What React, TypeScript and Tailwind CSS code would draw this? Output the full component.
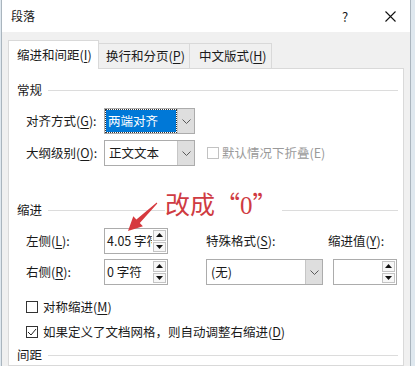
import React from 'react';

function Acc({ label, k, colon = false }: { label: string; k: string; colon?: boolean }) {
  return (
    <>
      {label}(<span className="underline underline-offset-2">{k}</span>){colon ? ':' : ''}
    </>
  );
}

function Chevron() {
  return (
    <svg width="9" height="5" viewBox="0 0 9 5">
      <path d="M0.5 0.5 L4.5 4.5 L8.5 0.5" stroke="#5a5a5a" fill="none" strokeWidth="1" />
    </svg>
  );
}

function Select({ w, value, focused = false }: { w: string; value: string; focused?: boolean }) {
  return (
    <div className={`flex h-full border border-[#acacac] bg-white ${w}`}>
      <div className="flex-1 flex items-center px-[1px]">
        {focused ? (
          <span className="flex items-center h-[22px] w-full bg-[#0078d7] text-white pl-[2px] outline outline-dotted outline-[#333]">{value}</span>
        ) : (
          <span className="pl-[3px]">{value}</span>
        )}
      </div>
      <div className="w-[17px] bg-[#dedede] border-l border-[#c6c6c6] flex items-center justify-center">
        <Chevron />
      </div>
    </div>
  );
}

function Spin({ value }: { value: string }) {
  return (
    <div className="flex w-[64px] h-full border border-[#acacac] bg-white">
      <div className="flex-1 overflow-hidden whitespace-nowrap flex items-center pl-[2px]">{value}</div>
      <div className="w-[15px] flex flex-col gap-[1px] p-[1px]">
        <div className="flex-1 flex items-center justify-center border border-[#c4c4c4] bg-[#f7f7f7]">
          <svg width="7" height="4" viewBox="0 0 7 4"><path d="M0 4 L3.5 0 L7 4 Z" fill="#111" /></svg>
        </div>
        <div className="flex-1 flex items-center justify-center border border-[#c4c4c4] bg-[#f7f7f7]">
          <svg width="7" height="4" viewBox="0 0 7 4"><path d="M0 0 L3.5 4 L7 0 Z" fill="#111" /></svg>
        </div>
      </div>
    </div>
  );
}

function Section({ title, className = '' }: { title: string; className?: string }) {
  return (
    <div className={`flex items-center h-[16px] ${className}`}>
      <span>{title}</span>
      <div className="flex-1 h-px bg-[#dcdcdc] ml-[6px] mr-[5px]" />
    </div>
  );
}

function Check({ checked = false, disabled = false }: { checked?: boolean; disabled?: boolean }) {
  return (
    <span className={`w-[12px] h-[12px] border bg-white flex items-center justify-center ${disabled ? 'border-[#c2c2c2]' : 'border-[#333]'}`}>
      {checked && (
        <svg width="10" height="10" viewBox="0 0 10 10">
          <path d="M1 5 L4 8 L9 2" stroke="#222" fill="none" strokeWidth="1" />
        </svg>
      )}
    </span>
  );
}

export default function App() {
  return (
    <div className="relative w-[415px] h-[366px] overflow-hidden bg-[#dfe8ef] text-[12.5px] leading-none text-[#1a1a1a] font-['Noto_Sans_CJK_SC','Noto_Sans',sans-serif]">
      <div className="ml-[1px] w-[410px] h-full flex flex-col bg-[#f0f0f0] border-x border-[#aab5be]">
        {/* Title bar */}
        <div className="h-[32px] bg-white flex items-center pl-[9px]">
          <span className="text-[12px]">段落</span>
          <div className="flex-1" />
          <span className="w-[20px] text-center text-[13px]">?</span>
          <span className="ml-[25px] w-[20px] flex justify-center">
            <svg width="11" height="11" viewBox="0 0 11 11">
              <path d="M0.5 0.5 L10.5 10.5 M10.5 0.5 L0.5 10.5" stroke="#111" strokeWidth="1.1" />
            </svg>
          </span>
          <span className="w-[10px]" />
        </div>

        {/* Tabs */}
        <div className="mt-[8px] ml-[6px] h-[28px] flex items-end">
          <div className="relative z-10 -mb-px h-[29px] w-[91px] bg-white border border-b-0 border-[#d9d9d9] flex items-center pl-[8px]">
            <Acc label="缩进和间距" k="I" />
          </div>
          <div className="h-[25px] w-[91px] border border-b-0 border-l-0 border-[#d9d9d9] bg-[#f0f0f0] flex items-center pl-[7px]">
            <Acc label="换行和分页" k="P" />
          </div>
          <div className="h-[25px] w-[82px] border border-b-0 border-l-0 border-[#d9d9d9] bg-[#f0f0f0] flex items-center pl-[9px]">
            <Acc label="中文版式" k="H" />
          </div>
        </div>

        {/* Panel */}
        <div className="ml-[6px] w-[396px] flex-1 bg-white border border-[#d9d9d9] pl-[8px] flex flex-col">
          <Section title="常规" className="mt-[13px]" />
          <div className="mt-[10px] h-[26px] flex items-center pl-[9px]">
            <span className="w-[78px]"><Acc label="对齐方式" k="G" colon /></span>
            <Select w="w-[91px]" value="两端对齐" focused />
          </div>
          <div className="mt-[6px] h-[26px] flex items-center pl-[9px]">
            <span className="w-[78px]"><Acc label="大纲级别" k="O" colon /></span>
            <Select w="w-[91px]" value="正文文本" />
            <span className="ml-[12px] flex items-center gap-[3px] text-[#9a9a9a]">
              <Check disabled />
              默认情况下折叠(E)
            </span>
          </div>

          <Section title="缩进" className="mt-[36px]" />
          <div className="mt-[10px] h-[26px] flex items-center pl-[9px]">
            <span className="w-[78px]"><Acc label="左侧" k="L" colon /></span>
            <Spin value="4.05 字符" />
            <span className="ml-[38px] w-[122px]"><Acc label="特殊格式" k="S" colon /></span>
            <span><Acc label="缩进值" k="Y" colon /></span>
          </div>
          <div className="mt-[5px] h-[26px] flex items-center pl-[9px]">
            <span className="w-[78px]"><Acc label="右侧" k="R" colon /></span>
            <Spin value="0 字符" />
            <div className="ml-[38px] h-full">
              <Select w="w-[117px]" value="(无)" />
            </div>
            <div className="ml-[10px] h-full">
              <Spin value="" />
            </div>
          </div>

          <div className="mt-[14px] h-[16px] flex items-center gap-[5px] pl-[9px]">
            <Check />
            <span><Acc label="对称缩进" k="M" /></span>
          </div>
          <div className="mt-[9px] h-[16px] flex items-center gap-[5px] pl-[9px]">
            <Check checked />
            <span><Acc label="如果定义了文档网格，则自动调整右缩进" k="D" /></span>
          </div>

          <Section title="间距" className="mt-[7px]" />
        </div>
      </div>

      {/* Red annotation over the dialog */}
      <div className="absolute left-[165px] top-[189px] bg-white pr-[4px] text-[25px] leading-[28px] text-[#cf3b42]">
        改成“<span className="font-['Liberation_Serif',serif]">0</span>”
      </div>
      <svg className="absolute left-[120px] top-[195px]" width="45" height="40" viewBox="0 0 45 40">
        <polygon
          points="8,36 13.3,21.3 16.4,24.5 36.7,7.6 37.3,8.4 19.8,28.1 22.9,31.3"
          fill="#d63a3f"
        />
      </svg>
    </div>
  );
}
